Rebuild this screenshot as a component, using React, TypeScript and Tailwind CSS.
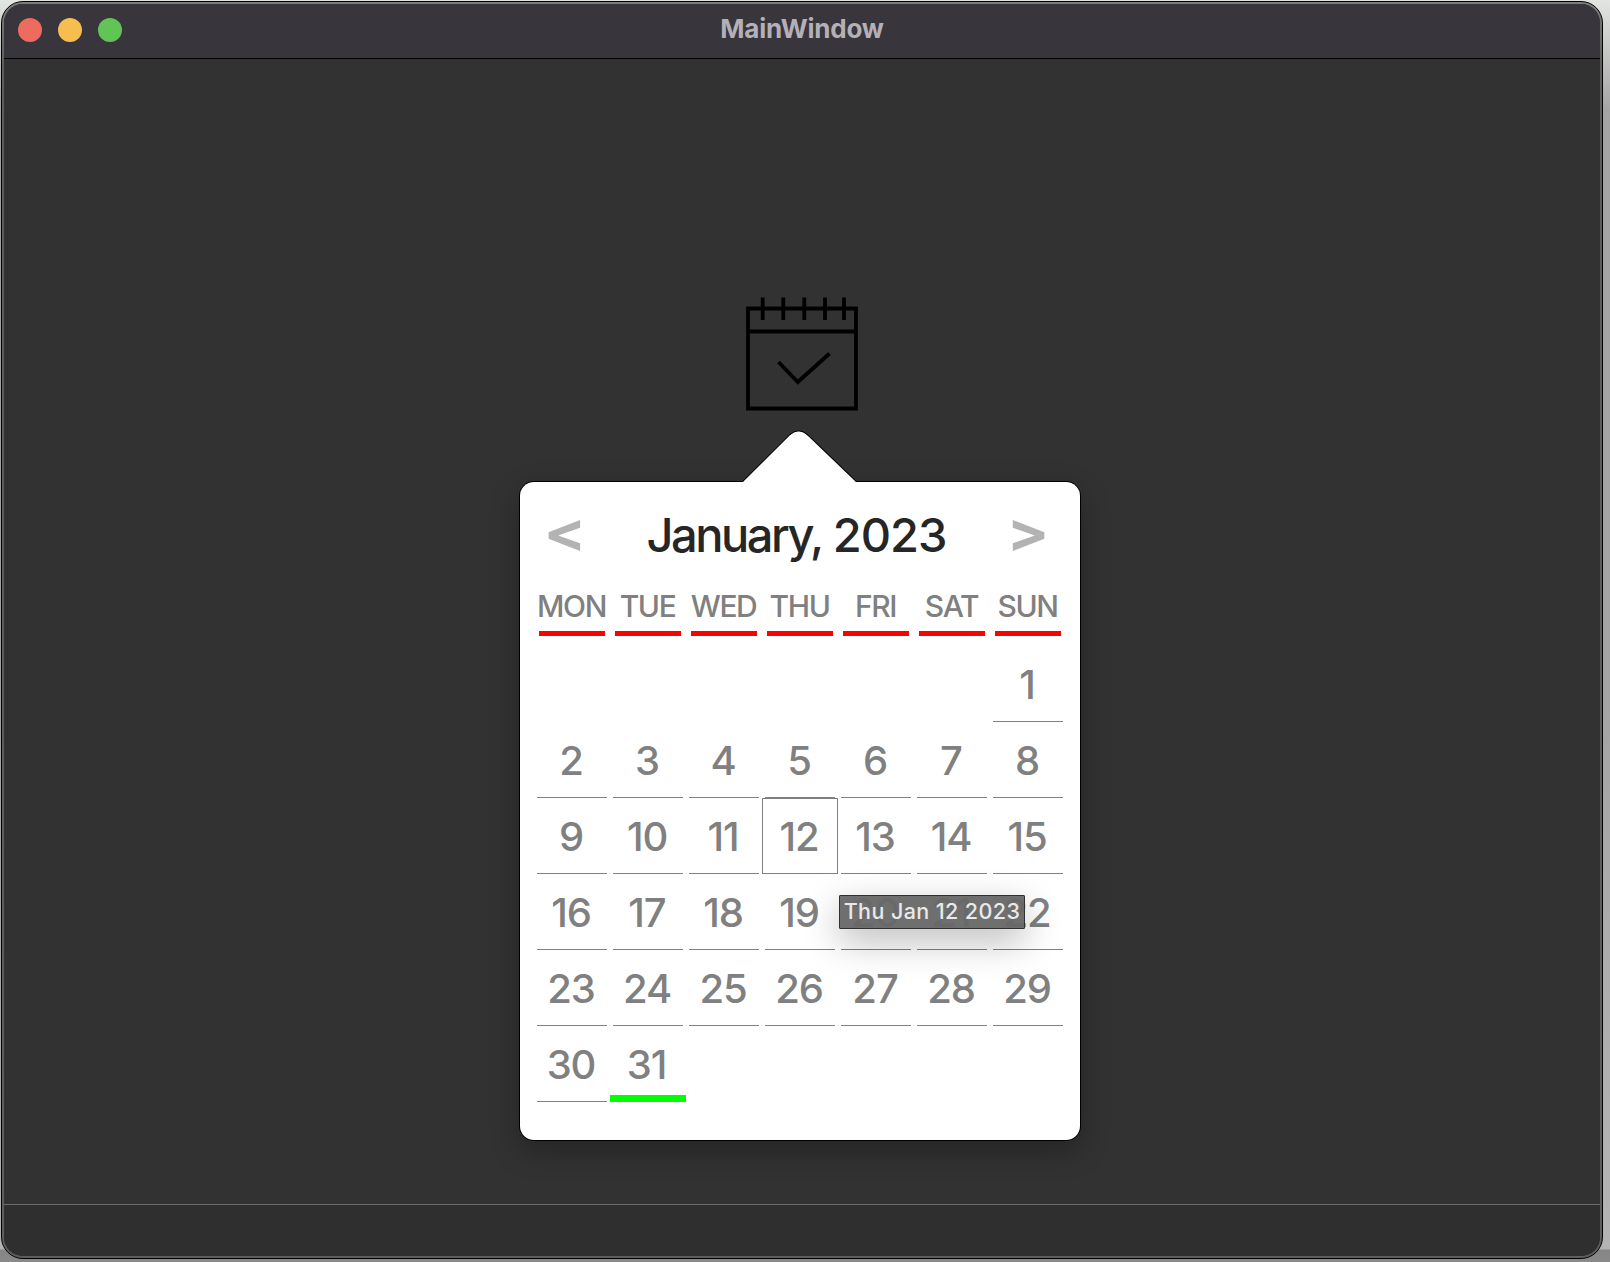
import React from "react";

const WEEKDAYS = ["MON", "TUE", "WED", "THU", "FRI", "SAT", "SUN"];
const LEADING_BLANKS = 6;
const DAYS = Array.from({ length: 31 }, (_, i) => i + 1);
const HOVERED = 12;
const TODAY = 31;

function CalendarIcon() {
  return (
    <svg width="112" height="114" viewBox="0 0 112 114" fill="none" stroke="#000" strokeWidth="3.8" className="block">
      <path d="M2 11.5H110V111.5H2ZM2 34.5H110" />
      <path d="M16.7 0.500V23M37.3 0.500V23M58.3 0.500V23M79 0.500V23M98 0.500V23" />
      <path d="M32.5 65L51.8 85L83.5 56.5" />
    </svg>
  );
}

function Day({ day }: { day: number }) {
  if (day === TODAY) {
    return (
      <div className="h-[76px] w-[76px] border-b-[7px] border-[#00ff00] pr-[3px] text-center leading-[78px]">{day}</div>
    );
  }
  if (day === HOVERED) {
    return (
      <div className="h-[76px] w-[76px] border border-[#808080] pr-0.5 text-center leading-[76px]">
        {day}
      </div>
    );
  }
  return (
    <div className="mx-[3px] h-[76px] w-[70px] border-b border-[#808080] pr-0.5 text-center leading-[78px]">{day}</div>
  );
}

function Tooltip() {
  return (
    <div className="absolute left-[319px] top-[413px] flex h-[34px] w-[186px] items-center justify-center whitespace-nowrap rounded-[1px] border border-[#303030] bg-[#676767]/95 text-[21.5px] font-medium leading-none tracking-[0.4px] text-[#e9e9e9] shadow-[0_12px_36px_rgba(0,0,0,0.28)]">
      Thu Jan 12 2023
    </div>
  );
}

function CalendarPopup() {
  return (
    <div className="relative mr-1 mt-[71px] h-[658px] w-[560px] rounded-[14px] bg-white shadow-[0_0_0_1px_#000,0_10px_30px_rgba(0,0,0,0.3)]">
      <svg width="116" height="53" viewBox="0 0 116 53" className="absolute left-[222px] top-[-52px]">
        <path d="M0 53L47 6Q56.5 -3.5 66 6L115 53Z" fill="#fff" />
        <path d="M.5 51.5L47.5 5Q56.5 -3.500 66 5L114.5 51.5" fill="none" stroke="#000" />
      </svg>
      <div className="flex h-[104px] items-center justify-between pl-[27px] pr-[34px] text-[47px] text-[#262626]">
        <span className="mb-1.5 flex w-[36px] scale-x-115 justify-center text-[55px] font-bold leading-[60px] text-[#b3b3b3]">&lt;</span>
        <span className="flex gap-[11px] whitespace-nowrap pt-0.5 font-[450]">
          <span className="tracking-[-2.5px]">January,</span>
          <span className="tracking-[-1px]">2023</span>
        </span>
        <span className="mb-1.5 flex w-[36px] scale-x-115 justify-center text-[55px] font-bold leading-[60px] text-[#b3b3b3]">&gt;</span>
      </div>
      <div className="flex pl-[14px] text-[30px] text-[#808080]">
        {WEEKDAYS.map((name) => (
          <div key={name} className="mx-[5px] flex h-[50px] w-[66px] justify-center whitespace-nowrap border-b-[5px] border-[#ff0000] pr-px font-[450] leading-[40px] tracking-[-1.4px]">
            {name}
          </div>
        ))}
      </div>
      <div className="ml-[14px] mt-[10px] grid w-[532px] grid-cols-7 text-[40px] font-[470] tracking-[-1.1px] text-[#808080]">
        {Array.from({ length: LEADING_BLANKS }, (_, i) => (
          <div key={`blank-${i}`} className="h-[76px]" />
        ))}
        {DAYS.map((day) => (
          <Day key={day} day={day} />
        ))}
      </div>
      <Tooltip />
    </div>
  );
}

export default function App() {
  return (
    <div className="h-[1262px] w-[1610px] overflow-hidden bg-[linear-gradient(180deg,#e2e5e2_0px,#a4a4a4_110px,#a4a4a4_700px,#b4b4b4_1249px,#858585_1250px,#8a8a8a_1262px)] pl-px pt-px font-['Inter',sans-serif]">
      <div className="h-[1258px] w-[1602px] overflow-hidden rounded-[22px] border border-black bg-linear-to-b from-[#7b7e7b] to-[#5d5e5e] to-5% p-[2px]">
        <div className="flex h-full flex-col overflow-hidden rounded-[19px] bg-[#323232]">
          <header className="relative flex h-[55px] shrink-0 items-center border-b border-black bg-[#39353c] pb-0.5 pl-[14px]">
            <div className="flex gap-4">
              <span className="size-6 rounded-full bg-[#ed6b5f]" />
              <span className="size-6 rounded-full bg-[#f5be4f]" />
              <span className="size-6 rounded-full bg-[#61c555]" />
            </div>
            <h1 className="absolute inset-x-0 top-[5px] text-center text-[26px] font-bold leading-[40px] tracking-[-0.2px] text-[#b5b0b8]">MainWindow</h1>
          </header>
          <main className="flex flex-1 flex-col items-center pt-[238px]">
            <CalendarIcon />
            <CalendarPopup />
          </main>
          <footer className="h-[52px] shrink-0 border-t border-[#6b6b6b] bg-[#2f2f2f]" />
        </div>
      </div>
    </div>
  );
}
